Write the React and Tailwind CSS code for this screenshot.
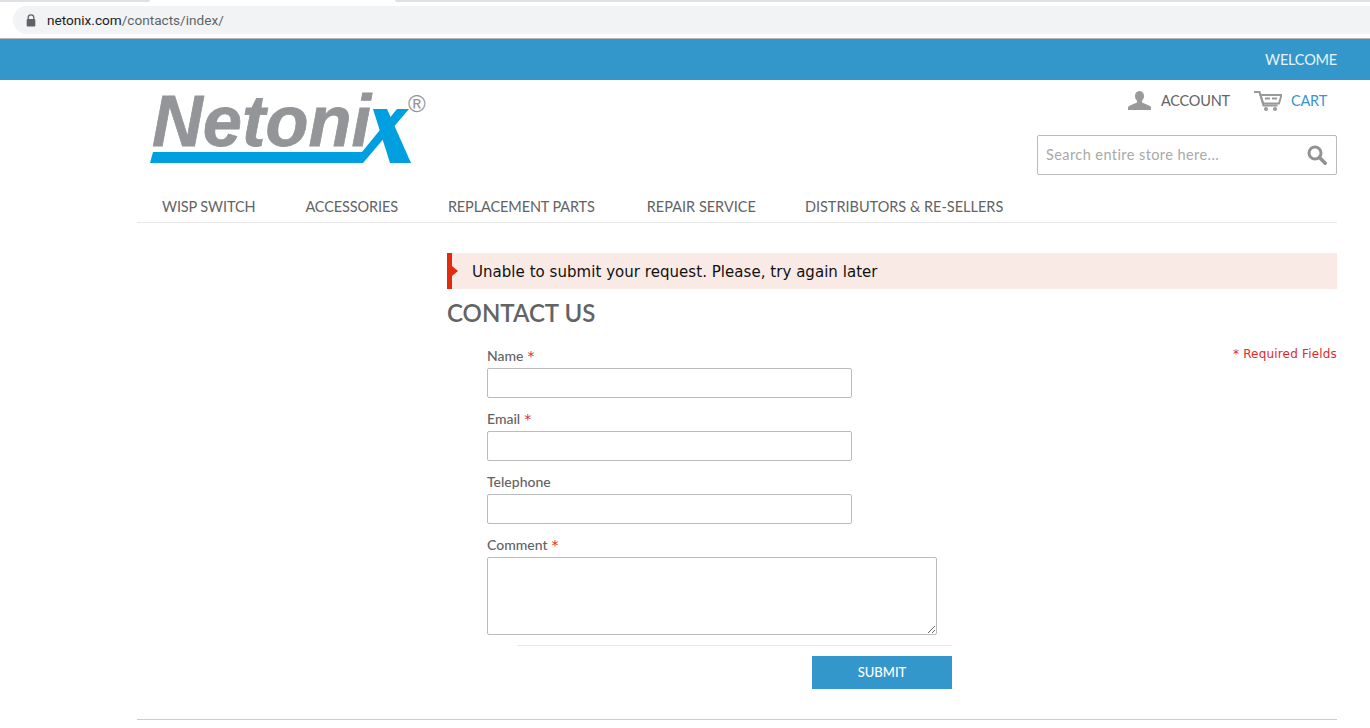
import React from "react";

const raleway = "font-['Lato','Open_Sans',sans-serif]";

function Lock() {
  return (
    <svg width="10" height="13" viewBox="0 0 10 13" className="block">
      <path d="M2.2 5V3.6a2.8 2.8 0 0 1 5.6 0V5" fill="none" stroke="#5f6368" strokeWidth="1.3" />
      <rect x="0.7" y="5" width="8.6" height="7.4" rx="1" fill="#5f6368" />
    </svg>
  );
}

function Logo() {
  return (
    <svg width="285" height="87" viewBox="0 -5 285 87" className="block">
      <text x="2" y="61" fontFamily="'Liberation Sans', sans-serif" fontWeight="700" fontStyle="italic" fontSize="72" textLength="219" lengthAdjust="spacingAndGlyphs" fill="#939598" stroke="#939598" strokeWidth="0.8">Netoni</text>
      <polygon points="223,24 237,24 261,78 240,78" fill="#009fdf" />
      <polygon points="259,24 247,24 212,67 3,67 0,78 213,78" fill="#009fdf" />
      <text x="258" y="27" fontFamily="'Liberation Sans', sans-serif" fontSize="24" fill="#939598">®</text>
    </svg>
  );
}

function User() {
  return (
    <svg width="23" height="19" viewBox="0 0 23 19" className="block">
      <path d="M11.5 0C8.6 0 7 2.2 7 5c0 2 .8 3.7 2 4.8v1.7L2 14.5C.7 15 0 16 0 17.2V19h23v-1.8c0-1.2-.7-2.2-2-2.7l-7-3V9.8c1.2-1.1 2-2.8 2-4.8 0-2.8-1.6-5-4.5-5z" fill="#999" />
    </svg>
  );
}

function Cart() {
  return (
    <svg width="28" height="20" viewBox="0 0 28 20" className="block">
      <path d="M0 1h5.5l4 13.5h14" fill="none" stroke="#999" strokeWidth="2" />
      <path d="M6.5 4H27.5l-2.5 8.5H9.2z" fill="none" stroke="#999" strokeWidth="2" />
      <rect x="11" y="6.5" width="5" height="2" fill="#999" />
      <rect x="18" y="6.5" width="5" height="2" fill="#999" />
      <circle cx="12" cy="18" r="2" fill="#999" />
      <circle cx="21" cy="18" r="2" fill="#999" />
    </svg>
  );
}

function Search() {
  return (
    <svg width="20" height="20" viewBox="0 0 20 20" className="block">
      <circle cx="8" cy="8" r="6" fill="none" stroke="#929292" strokeWidth="3" />
      <path d="M12.5 12.5L18.2 18.2" stroke="#929292" strokeWidth="3.6" strokeLinecap="round" />
    </svg>
  );
}

function Field({ label, required, big }) {
  return (
    <div className="flex flex-col">
      <label className={`h-[22px] text-[14px] leading-[20px] font-medium text-[#636363] ${raleway}`}>
        {label}
        {required && <span className="ml-[4px] font-['DejaVu_Sans',sans-serif] text-[14px] text-[#e02b27]">*</span>}
      </label>
      {big ? (
        <textarea className="block h-[78px] w-[450px] rounded-[2px] border border-[#bbb] bg-white" />
      ) : (
        <input className="block h-[30px] w-[365px] rounded-[2px] border border-[#bbb] bg-white" />
      )}
    </div>
  );
}

export default function App() {
  return (
    <div className={`h-[728px] w-[1370px] overflow-hidden bg-white ${raleway}`}>
      {/* Browser chrome */}
      <div className="relative h-[39px] border-b border-[#b4b6b8] bg-white pl-[13px] pt-[6px]">
        <div className="absolute left-0 top-0 h-[2px] w-[150px] rounded-br-lg bg-[#dee1e6]" />
        <div className="absolute right-0 top-0 h-[2px] w-[975px] rounded-bl-lg bg-[#dee1e6]" />
        <div className="flex h-[28px] items-center rounded-l-[14px] bg-[#f1f3f4] pl-[13px]">
          <Lock />
          <span className="ml-[11px] font-['Roboto',sans-serif] text-[13.6px] text-[#202124]">
            netonix.com<span className="text-[#5f6368]">/contacts/index/</span>
          </span>
        </div>
      </div>

      {/* Blue bar */}
      <div className="flex h-[41px] items-center justify-end bg-[#3497cc] pr-[33px]">
        <span className="text-[14.5px] tracking-[-0.2px] text-[#e8f3f9]">WELCOME</span>
      </div>

      <div className="ml-[137px] w-[1200px]">
        {/* Header */}
        <div className="flex h-[103px] justify-between">
          <div className="pl-[13px]">
            <Logo />
          </div>
          <div className="flex flex-col items-end">
            <div className="flex h-[55px] items-center pb-[14px] pr-[10px] text-[14.5px] tracking-[-0.2px]">
              <User />
              <span className="ml-[10px] text-[#636363]">ACCOUNT</span>
              <span className="ml-[24px]"><Cart /></span>
              <span className="ml-[9px] text-[#3497cc]">CART</span>
            </div>
            <div className="flex h-[40px] w-[300px] items-center justify-between rounded-[2px] border border-[#bbb] pl-[8px] pr-[9px]">
              <span className="text-[14.5px] tracking-[0.42px] text-[#a9a9a9]">Search entire store here...</span>
              <Search />
            </div>
          </div>
        </div>

        {/* Nav */}
        <nav className="flex h-[40px] items-center gap-[50px] border-b border-[#e8e8e8] pl-[25px] pt-[8px] text-[14.5px] tracking-[-0.12px] text-[#636363]">
          <span>WISP SWITCH</span>
          <span>ACCESSORIES</span>
          <span>REPLACEMENT PARTS</span>
          <span className="ml-[2px] tracking-normal">REPAIR SERVICE</span>
          <span className="-ml-px tracking-normal">DISTRIBUTORS &amp; RE-SELLERS</span>
        </nav>

        {/* Body */}
        <div className="flex h-[497px] border-b border-[#ccc]">
          <div className="w-[310px] shrink-0" />
          <div className="flex-1 pt-[30px]">
            <div className="relative flex h-[36px] items-center border-l-[5px] border-[#e02b0f] bg-[#f9eae6] pl-[20px] pt-[2px] font-['DejaVu_Sans',sans-serif] text-[15px] tracking-[0.04px] text-[#111]">
              <span className="absolute left-0 top-[13px] h-0 w-0 border-y-[5px] border-l-[6px] border-y-transparent border-l-[#e02b0f]" />
              Unable to submit your request. Please, try again later
            </div>
            <h1 className="mt-[9px] h-[30px] text-[24px] font-semibold leading-[30px] text-[#636363]">CONTACT US</h1>
            <div className="relative pl-[40px] pt-[18px]">
              <span className="absolute right-0 top-[17px] font-['DejaVu_Sans',sans-serif] text-[12px] tracking-[0.18px] text-[#e02b27]">* Required Fields</span>
              <div className="flex flex-col gap-[11px]">
                <Field label="Name" required />
                <Field label="Email" required />
                <Field label="Telephone" />
                <Field label="Comment" required big />
              </div>
              <div className="ml-[30px] mt-[10px] w-[435px] border-t border-[#e8e8e8] pt-[10px]">
                <div className="flex justify-end">
                  <button className="h-[33px] w-[140px] bg-[#3497cc] text-[13px] font-medium text-white">SUBMIT</button>
                </div>
              </div>
            </div>
          </div>
        </div>
      </div>
    </div>
  );
}
